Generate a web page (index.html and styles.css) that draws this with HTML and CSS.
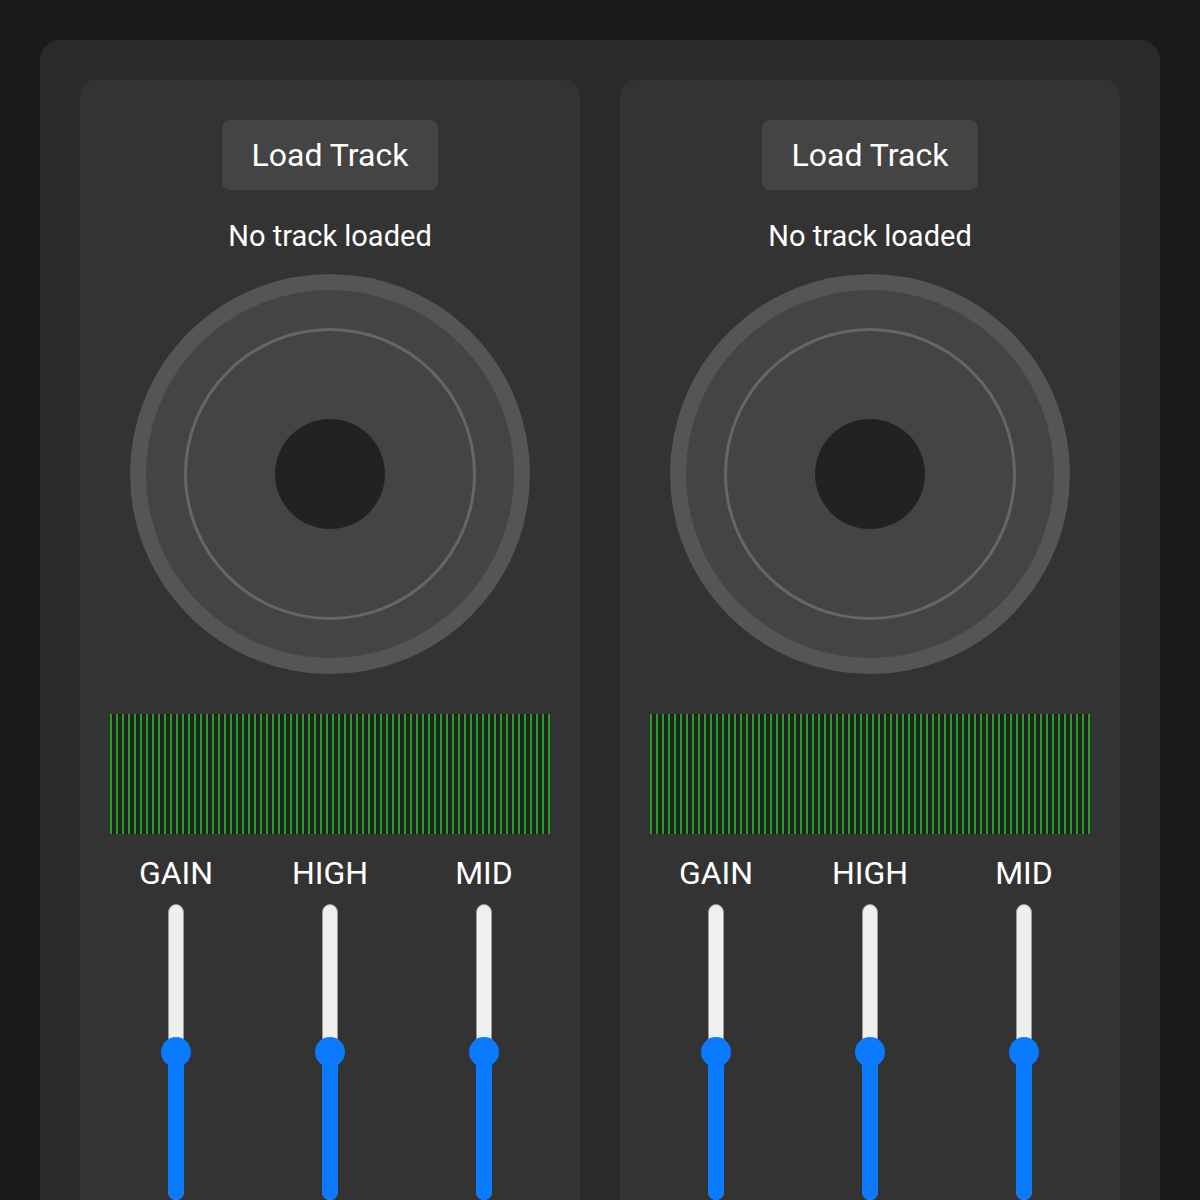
FILE: index.html
```html
<!DOCTYPE html>
<html lang="en">
<head>
    <meta charset="UTF-8">
    <meta name="viewport" content="width=device-width, initial-scale=1.0">
    <title>DJ Mixer</title>
    <link rel="stylesheet" href="styles.css">
</head>
<body>
    <div class="mixer">
        <!-- Deck A -->
        <div class="deck">
            <button class="load-btn">Load Track</button>
            <div class="track-name">No track loaded</div>
            <div class="turntable">
                <div class="platter">
                    <div class="spindle"></div>
                </div>
            </div>
            <div class="waveform"></div>
            <div class="eq">
                <div class="knob">
                    <div class="label">GAIN</div>
                    <div class="fader"><div class="fill" style="height: 50%"></div><div class="thumb" style="bottom: 50%"></div></div>
                </div>
                <div class="knob">
                    <div class="label">HIGH</div>
                    <div class="fader"><div class="fill" style="height: 50%"></div><div class="thumb" style="bottom: 50%"></div></div>
                </div>
                <div class="knob">
                    <div class="label">MID</div>
                    <div class="fader"><div class="fill" style="height: 50%"></div><div class="thumb" style="bottom: 50%"></div></div>
                </div>
            </div>
        </div>

        <!-- Deck B -->
        <div class="deck">
            <button class="load-btn">Load Track</button>
            <div class="track-name">No track loaded</div>
            <div class="turntable">
                <div class="platter">
                    <div class="spindle"></div>
                </div>
            </div>
            <div class="waveform"></div>
            <div class="eq">
                <div class="knob">
                    <div class="label">GAIN</div>
                    <div class="fader"><div class="fill" style="height: 50%"></div><div class="thumb" style="bottom: 50%"></div></div>
                </div>
                <div class="knob">
                    <div class="label">HIGH</div>
                    <div class="fader"><div class="fill" style="height: 50%"></div><div class="thumb" style="bottom: 50%"></div></div>
                </div>
                <div class="knob">
                    <div class="label">MID</div>
                    <div class="fader"><div class="fill" style="height: 50%"></div><div class="thumb" style="bottom: 50%"></div></div>
                </div>
            </div>
        </div>
    </div>
</body>
</html>
```

FILE: styles.css
```css
body { margin: 0; padding: 40px; background: #1a1a1a; color: #fff; font-family: Roboto, "Liberation Sans", sans-serif; height: 1200px; overflow: hidden; box-sizing: border-box; }
.mixer { display: flex; gap: 40px; padding: 40px; background: #2a2a2a; border-radius: 20px; min-height: 1200px; }
.deck { flex: 1; display: flex; flex-direction: column; align-items: center; padding: 40px 30px; background: #333; border-radius: 15px; }

.load-btn { width: 216px; height: 70px; padding: 0; background: #444; color: #fff; border: none; border-radius: 8px; font-family: inherit; font-size: 32px; cursor: pointer; }
.load-btn:hover { background: #555; }
.track-name { margin-top: 31px; font-size: 29px; line-height: 30px; }

/* turntable */
.turntable { margin-top: 23px; width: 400px; height: 400px; box-sizing: border-box; border: 16px solid #555; border-radius: 50%; background: #444; display: flex; align-items: center; justify-content: center; }
.platter { width: 292px; height: 292px; box-sizing: border-box; border: 3px solid #666; border-radius: 50%; display: flex; align-items: center; justify-content: center; }
.spindle { width: 110px; height: 110px; border-radius: 50%; background: #222; }

.waveform { margin-top: 40px; width: 100%; height: 120px; background: repeating-linear-gradient(90deg, #22a022 0 2px, #222 2px 6px); }

/* eq faders */
.eq { margin-top: 21px; width: 100%; display: flex; justify-content: space-between; }
.knob { width: 132px; display: flex; flex-direction: column; align-items: center; }
.label { font-size: 32px; line-height: 36px; }
.fader { position: relative; margin-top: 13px; width: 16px; height: 296px; box-sizing: border-box; background: #efefef; border: 1px solid #9a9a9a; border-radius: 8px; }
.fill { position: absolute; left: -1px; right: -1px; bottom: -1px; background: #0a7aff; border-radius: 8px; }
.thumb { position: absolute; left: 50%; width: 30px; height: 30px; margin-left: -15px; margin-bottom: -15px; border-radius: 50%; background: #0a7aff; }
```
